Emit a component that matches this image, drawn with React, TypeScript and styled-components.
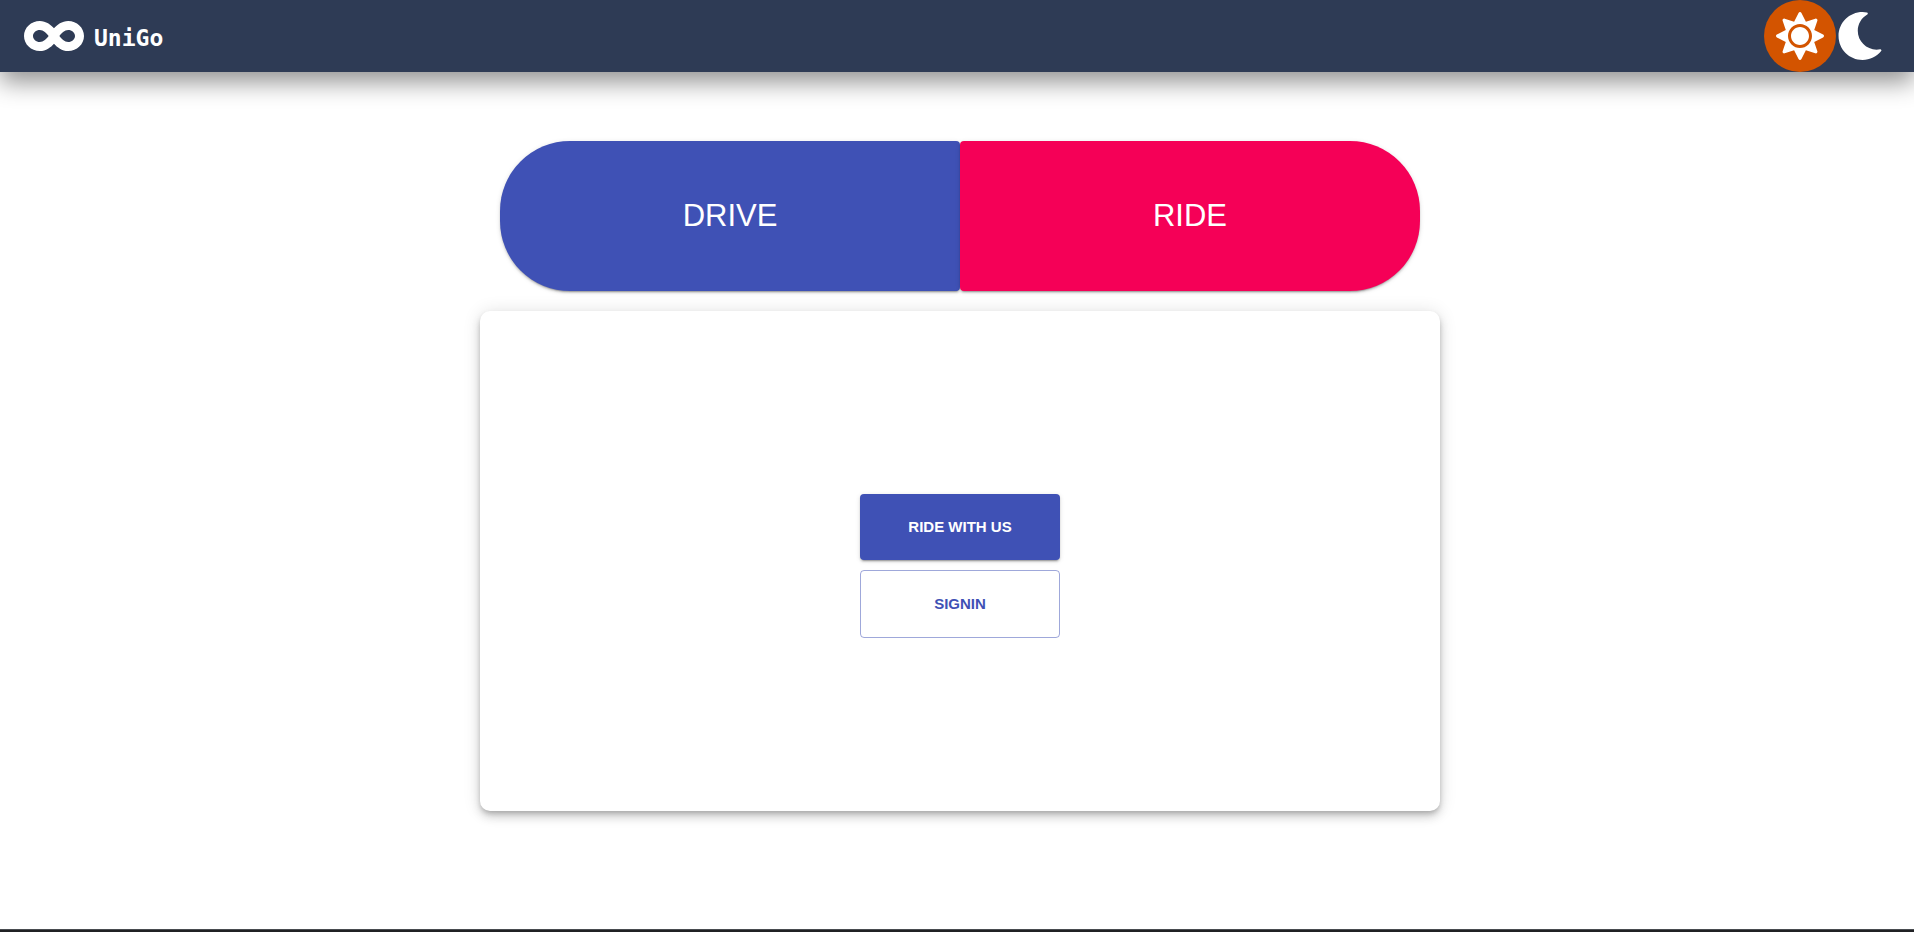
import React, { useState } from "react";
import styled, { createGlobalStyle } from "styled-components";
import { FaInfinity, FaMoon, FaSun } from "react-icons/fa";

const GlobalStyle = createGlobalStyle`
  *, *::before, *::after { box-sizing: border-box; }
  body {
    margin: 0;
    background: #fff;
    font-family: "Liberation Sans", Arial, sans-serif;
  }
`;

const Page = styled.div`
  display: flex;
  flex-direction: column;
  min-height: 100vh;
`;

const Header = styled.header`
  display: flex;
  align-items: center;
  justify-content: space-between;
  height: 72px;
  padding: 0 30px 0 24px;
  background: #2e3b55;
  color: #fff;
  box-shadow: 0 10px 24px 0 rgba(0, 0, 0, 0.43);
`;

const Brand = styled.a`
  display: flex;
  align-items: center;
  gap: 10px;
  color: #fff;
  text-decoration: none;
`;

const BrandName = styled.span`
  padding-top: 4px;
  font: bold 23px/28px "DejaVu Sans Mono", monospace;
`;

const InfinityMark = styled(FaInfinity)`
  width: 60px;
  height: 48px;
`;

const ThemeSwitch = styled.div`
  display: flex;
`;

const ThemeButton = styled.button<{ $active: boolean }>`
  display: flex;
  padding: ${({ $active }) => ($active ? "12px" : "12px 0")};
  border: 0;
  border-radius: ${({ $active }) => ($active ? "50%" : "0")};
  background: ${({ $active }) => ($active ? "#d35400" : "transparent")};
  color: #fff;
  cursor: pointer;

  svg {
    width: 48px;
    height: 48px;
  }
`;

const Main = styled.main`
  display: flex;
  flex: 1;
  flex-direction: column;
  align-items: center;
  gap: 20px;
  padding: 69px 0 20px 6px;
`;

const raised = `
  0 3px 1px -2px rgba(0, 0, 0, 0.2),
  0 2px 2px 0 rgba(0, 0, 0, 0.14),
  0 1px 5px 0 rgba(0, 0, 0, 0.12)
`;

const ModeBar = styled.div`
  display: flex;
  width: 100%;
  max-width: 920px;
`;

const ModeButton = styled.button<{ $side: "left" | "right" }>`
  flex: 1;
  height: 150px;
  border: 0;
  border-radius: ${({ $side }) =>
    $side === "left" ? "70px 4px 4px 70px" : "4px 70px 70px 4px"};
  background: ${({ $side }) => ($side === "left" ? "#3f51b5" : "#f50057")};
  box-shadow: ${raised};
  color: #fff;
  font: 31px/56px "Liberation Sans", Arial, sans-serif;
  cursor: pointer;
`;

const Card = styled.section`
  display: flex;
  flex-direction: column;
  align-items: center;
  justify-content: center;
  gap: 10px;
  width: 100%;
  max-width: 960px;
  min-height: 500px;
  padding-top: 10px;
  border-radius: 10px;
  background: #fff;
  box-shadow:
    0 3px 5px -1px rgba(0, 0, 0, 0.2),
    0 6px 10px 0 rgba(0, 0, 0, 0.14),
    0 1px 18px 0 rgba(0, 0, 0, 0.12);
`;

const ActionButton = styled.button<{ $outlined?: boolean }>`
  width: 200px;
  height: ${({ $outlined }) => ($outlined ? "68px" : "66px")};
  border: ${({ $outlined }) =>
    $outlined ? "1px solid rgba(63, 81, 181, 0.5)" : "0"};
  border-radius: 4px;
  background: ${({ $outlined }) => ($outlined ? "transparent" : "#3f51b5")};
  box-shadow: ${({ $outlined }) => ($outlined ? "none" : raised)};
  color: ${({ $outlined }) => ($outlined ? "#3f51b5" : "#fff")};
  font: bold 15px/26px "Liberation Sans", Arial, sans-serif;
  cursor: pointer;
`;

const BottomEdge = styled.footer`
  height: 3px;
  border-top: 1px solid #494c50;
  background: #202124;
`;

export default function App() {
  const [theme, setTheme] = useState<"light" | "dark">("light");

  return (
    <Page>
      <GlobalStyle />
      <Header>
        <Brand href="#">
          <InfinityMark aria-hidden />
          <BrandName>UniGo</BrandName>
        </Brand>
        <ThemeSwitch>
          <ThemeButton
            type="button"
            aria-label="Light theme"
            $active={theme === "light"}
            onClick={() => setTheme("light")}
          >
            <FaSun />
          </ThemeButton>
          <ThemeButton
            type="button"
            aria-label="Dark theme"
            $active={theme === "dark"}
            onClick={() => setTheme("dark")}
          >
            <FaMoon />
          </ThemeButton>
        </ThemeSwitch>
      </Header>
      <Main>
        <ModeBar>
          <ModeButton type="button" $side="left">DRIVE</ModeButton>
          <ModeButton type="button" $side="right">RIDE</ModeButton>
        </ModeBar>
        <Card>
          <ActionButton type="button">RIDE WITH US</ActionButton>
          <ActionButton type="button" $outlined>SIGNIN</ActionButton>
        </Card>
      </Main>
      <BottomEdge />
    </Page>
  );
}
